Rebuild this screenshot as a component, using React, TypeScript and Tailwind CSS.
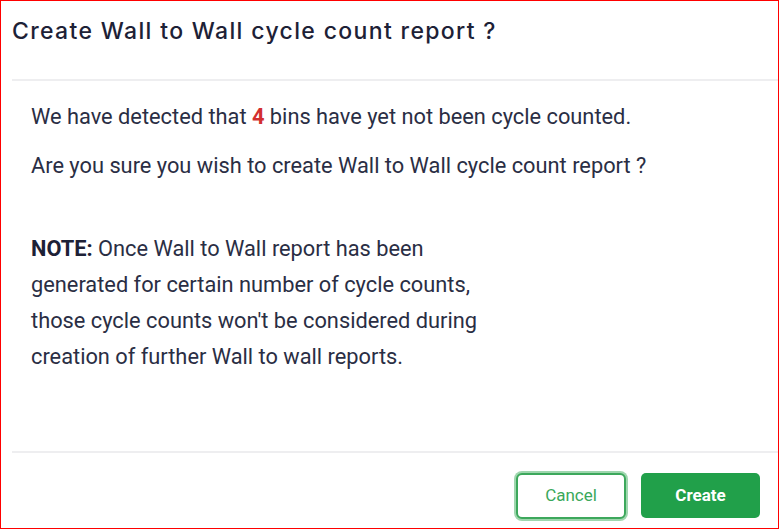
import React from 'react';

const bodyFont = { fontFamily: 'Roboto, "Liberation Sans", sans-serif' };

export default function App() {
    return (
        <div className="w-[779px] h-[529px] border border-[#ff0000] bg-white flex flex-col">
            <div className="h-[78px] pl-[11px] pt-[14px]">
                <h1 className="text-[23px] leading-[32px] font-medium text-[#1d2136] font-['Inter',sans-serif] tracking-[1.35px]">
                    Create Wall to Wall cycle count report ?
                </h1>
            </div>
            <div className="ml-[11px] h-[2px] bg-[#eeeef0]" />
            <div className="flex-1 pl-[30px] pt-[18px] text-[21.8px] text-[#2a2e44]" style={bodyFont}>
                <p className="leading-[36px]">
                    We have detected that <span className="font-bold text-[#d32f2f]">4</span> bins have yet not been cycle counted.
                </p>
                <p className="leading-[36px] mt-[13px]">
                    Are you sure you wish to create Wall to Wall cycle count report ?
                </p>
                <p className="leading-[36px] mt-[47px] max-w-[465px]">
                    <span className="font-bold text-[#1d2136]">NOTE:</span> Once Wall to Wall report has been generated for certain number of cycle counts, those cycle counts won't be considered during creation of further Wall to wall reports.
                </p>
            </div>
            <div className="ml-[11px] h-[2px] bg-[#eeeef0]" />
            <div className="h-[75px] flex items-start justify-end gap-[15px] pr-[18px] pt-[20px]" style={bodyFont}>
                <button className="w-[110px] h-[46px] rounded-[6px] border-2 border-[#3da85c] ring-2 ring-[#9fd6ae] text-[17px] text-[#3aa85a] bg-white">
                    Cancel
                </button>
                <button className="w-[119px] h-[45px] rounded-[5px] bg-[#21a04a] text-[17px] font-bold text-white">
                    Create
                </button>
            </div>
        </div>
    );
}
